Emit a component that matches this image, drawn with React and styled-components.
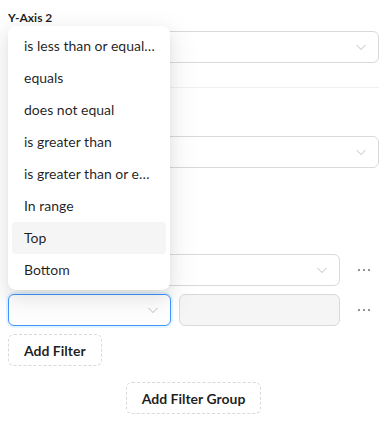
import React from "react";
import styled, { createGlobalStyle } from "styled-components";

const GlobalStyle = createGlobalStyle`
  html, body {
    margin: 0;
    padding: 0;
    background: #ffffff;
  }
  body {
    font-family: Lato, "Noto Sans", sans-serif;
    color: rgba(0, 0, 0, 0.88);
  }
`;

/**
 * Options shown in the open operator dropdown
 */
const operators = [
  "is less than or equal to",
  "equals",
  "does not equal",
  "is greater than",
  "is greater than or equal to",
  "In range",
  "Top",
  "Bottom"
];

const Panel = styled("div")`
  position: relative;
  width: 388px;
  height: 429px;
  box-sizing: border-box;
  padding: 10px 9px 0 8px;
  overflow: hidden;
`;

const Label = styled("div")`
  font-size: 12px;
  line-height: 16px;
  font-weight: 700;
  color: rgba(0, 0, 0, 0.88);
  margin-bottom: 5px;
`;

const Divider = styled("div")`
  height: 1px;
  background: #f0f0f0;
  margin: 24px 0 0;
`;

/* space under the open menu, where the hidden section headers sit */
const Section = styled("div")`
  padding-top: ${p => p.top || 0}px;
`;

const SelectBox = styled("div")`
  position: relative;
  box-sizing: border-box;
  height: 32px;
  flex: ${p => (p.fixed ? "0 0 auto" : "1 1 0")};
  width: ${p => (p.fixed ? "163px" : "auto")};
  border: 1px solid ${p => (p.focused ? "#4096ff" : "#d9d9d9")};
  border-radius: 6px;
  background: #ffffff;
  box-shadow: ${p => (p.focused ? "0 0 0 2px rgba(5, 145, 255, 0.1)" : "none")};
`;

const Chevron = styled("svg")`
  position: absolute;
  right: 11px;
  top: 50%;
  margin-top: -6px;
  width: 12px;
  height: 12px;
`;

const DisabledInput = styled("div")`
  box-sizing: border-box;
  height: 32px;
  flex: 1 1 0;
  border: 1px solid #d9d9d9;
  border-radius: 6px;
  background: rgba(0, 0, 0, 0.04);
`;

const Row = styled("div")`
  display: flex;
  align-items: center;
  gap: 8px;
  margin-bottom: 8px;
`;

const Fields = styled("div")`
  display: flex;
  flex: 1 1 0;
  gap: 8px;
`;

const Dots = styled("div")`
  display: flex;
  justify-content: center;
  align-items: center;
  gap: 2.5px;
  width: 24px;
  height: 24px;
  margin-left: 4px;
  margin-right: 3px;

  & span {
    width: 2.5px;
    height: 2.5px;
    background: #8c979d;
  }
`;

const DashedButton = styled("button")`
  box-sizing: border-box;
  height: 32px;
  padding: 0 15px;
  border: 1px dashed #d9d9d9;
  border-radius: 6px;
  background: #ffffff;
  font-family: Lato, "Noto Sans", sans-serif;
  font-size: 14px;
  font-weight: 700;
  color: rgba(0, 0, 0, 0.88);
  cursor: pointer;
`;

const Center = styled("div")`
  display: flex;
  justify-content: center;
  margin-top: 16px;
`;

const Menu = styled("div")`
  position: absolute;
  top: 26px;
  left: 8px;
  width: 162px;
  box-sizing: border-box;
  padding: 4px;
  background: #ffffff;
  border-radius: 8px;
  box-shadow: 0 6px 16px 0 rgba(0, 0, 0, 0.08),
    0 3px 6px -4px rgba(0, 0, 0, 0.12), 0 9px 28px 8px rgba(0, 0, 0, 0.05);
  z-index: 10;
`;

const MenuItem = styled("div")`
  height: 32px;
  line-height: 32px;
  padding: 0 9px 0 12px;
  border-radius: 4px;
  font-size: 14px;
  color: rgba(0, 0, 0, 0.88);
  background: ${p => (p.active ? "#f5f5f5" : "transparent")};
  white-space: nowrap;
  overflow: hidden;
  text-overflow: ellipsis;
`;

const Arrow = () => (
  <Chevron viewBox="0 0 12 12">
    <path
      d="M1.5 4 L6 8.5 L10.5 4"
      fill="none"
      stroke="rgba(0,0,0,0.25)"
      strokeWidth="1"
    />
  </Chevron>
);

const Select = props => (
  <SelectBox {...props}>
    <Arrow />
  </SelectBox>
);

const More = () => (
  <Dots>
    <span />
    <span />
    <span />
  </Dots>
);

const App = () => {
  return (
    <Panel>
      <GlobalStyle />

      <Label>Y-Axis 2</Label>
      <Select />
      <Divider />

      <Section top={48}>
        <Select />
      </Section>

      <Section top={86}>
        <Row>
          <Select />
          <More />
        </Row>
      </Section>
      <Row>
        <Fields>
          <Select fixed focused />
          <DisabledInput />
        </Fields>
        <More />
      </Row>

      <DashedButton>Add Filter</DashedButton>

      <Center>
        <DashedButton>Add Filter Group</DashedButton>
      </Center>

      <Menu>
        {operators.map(op => (
          <MenuItem key={op} active={op === "Top"}>
            {op}
          </MenuItem>
        ))}
      </Menu>
    </Panel>
  );
};

export default App;
